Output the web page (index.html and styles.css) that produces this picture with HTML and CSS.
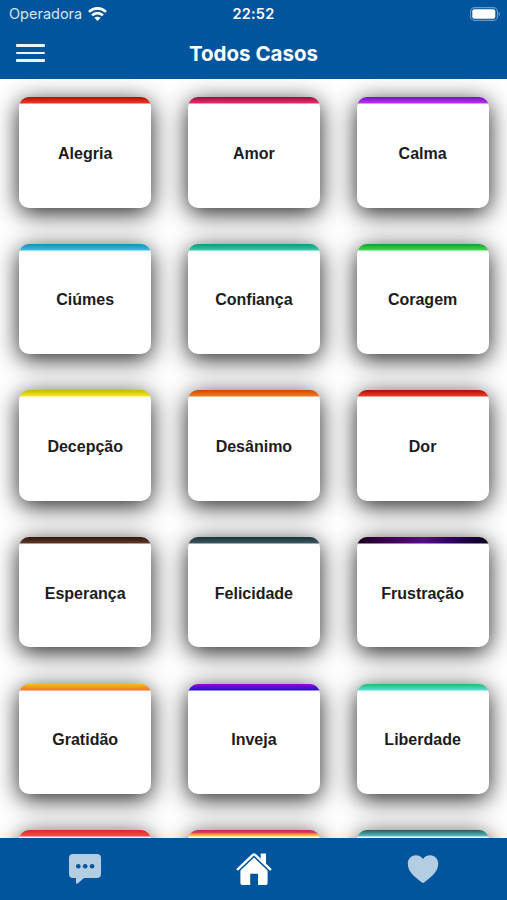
FILE: index.html
```html
<!DOCTYPE html>
<html lang="pt-BR">
<head>
    <meta charset="UTF-8">
    <meta name="viewport" content="width=device-width, initial-scale=1.0">
    <title>Todos Casos</title>
    <link rel="stylesheet" href="styles.css">
</head>

<body>

<header>
    <!-- Status bar -->
    <div class="status-bar">
        <div class="carrier">
            <span>Operadora</span>
            <svg class="wifi" width="19" height="14" viewBox="0 0 19 14" fill="none" stroke="#fff" stroke-width="2.7">
                <path d="M1 4.9C5.8 .2 13.2 .2 18 4.9"/>
                <path d="M4.1 8.4c3.1-3 7.7-3 10.8 0"/>
                <path d="M9.5 13.9L6.4 10.8c1.7-1.5 4.5-1.5 6.2 0z" fill="#fff" stroke="none"/>
            </svg>
        </div>
        <span class="clock">22:52</span>
        <svg class="battery" width="31" height="14" viewBox="0 0 31 14">
            <rect x=".6" y=".6" width="26.8" height="12.8" rx="4" fill="none" stroke="#6a9bc8" stroke-width="1.1"/>
            <rect x="2.3" y="2.3" width="23" height="9.4" rx="2" fill="#fff"/>
            <path d="M28.6 5c1.8.5 1.8 3.5 0 4z" fill="#6a9bc8"/>
        </svg>
    </div>

    <!-- Title bar -->
    <div class="title-bar">
        <button class="menu-btn" aria-label="Menu"><i></i><i></i><i></i></button>
        <h1>Todos Casos</h1>
    </div>
</header>

<main>
    <div class="cards">
        <div class="card alegria">Alegria</div>
        <div class="card amor">Amor</div>
        <div class="card calma">Calma</div>
        <div class="card ciumes">Ciúmes</div>
        <div class="card confianca">Confiança</div>
        <div class="card coragem">Coragem</div>
        <div class="card decepcao">Decepção</div>
        <div class="card desanimo">Desânimo</div>
        <div class="card dor">Dor</div>
        <div class="card esperanca">Esperança</div>
        <div class="card felicidade">Felicidade</div>
        <div class="card frustracao">Frustração</div>
        <div class="card gratidao">Gratidão</div>
        <div class="card inveja">Inveja</div>
        <div class="card liberdade">Liberdade</div>
        <div class="card row6-a"></div>
        <div class="card row6-b"></div>
        <div class="card row6-c"></div>
    </div>
</main>

<!-- Bottom tabs -->
<nav>
    <a class="tab">
        <svg width="34" height="32" viewBox="0 0 34 32">
            <path d="M5 1H29Q33 1 33 5V21Q33 25 29 25H16L10 30.2Q8 31.8 8 29.5V25H5Q1 25 1 21V5Q1 1 5 1Z" fill="#b3cde3"/>
            <g fill="#00559c">
                <circle cx="10.3" cy="13.2" r="2.3"/>
                <circle cx="17.2" cy="13.2" r="2.3"/>
                <circle cx="24.1" cy="13.2" r="2.3"/>
            </g>
        </svg>
    </a>
    <a class="tab active">
        <svg width="36" height="34" viewBox="0 0 36 34">
            <path d="M24.7 1.6H30V14L24.7 9Z" fill="#fff"/>
            <path d="M18 5L31.6 18V31.3Q31.6 33 29.9 33H22V21.8H14.2V33H6.1Q4.4 33 4.4 31.3V18Z" fill="#fff"/>
            <path d="M2.6 19.2L18 4.6L33.4 19.2" fill="none" stroke="#00559c" stroke-width="1.4"/>
            <path d="M1.7 17.3L16.6 3.2Q18 1.9 19.4 3.2L34.3 17.3" fill="none" stroke="#fff" stroke-width="2.4" stroke-linecap="round"/>
        </svg>
    </a>
    <a class="tab">
        <svg width="32" height="30" viewBox="0 0 32 30">
            <path d="M16 28.9Q15.3 28.9 14.6 28.3C6.6 22.2 .8 17.5 .8 9.6C.8 4.8 4.2 1.2 8.8 1.2C11.9 1.2 14.5 2.7 16 5.1C17.5 2.7 20.1 1.2 23.2 1.2C27.8 1.2 31.2 4.8 31.2 9.6C31.2 17.5 25.4 22.2 17.4 28.3Q16.7 28.9 16 28.9Z" fill="#b3cde3"/>
        </svg>
    </a>
</nav>

</body>
</html>
```
FILE: styles.css
```css
* {
    box-sizing: border-box;
}
body {
    display: flex;
    flex-direction: column;
    height: 100vh;
    margin: 0;
    overflow: hidden;
    font-family: "Liberation Sans", Arial, sans-serif;
    background-color: #fff;
}
header {
    flex: none;
    height: 79px;
    background-color: #00559c;
    color: #fff;
    font-family: Inter, sans-serif;
}

/* status bar */
.status-bar {
    display: grid;
    grid-template-columns: 1fr auto 1fr;
    align-items: center;
    height: 27px;
    padding: 0 6px 0 9px;
}
.carrier {
    display: flex;
    align-items: center;
    gap: 6px;
    font-size: 14.5px;
    color: #d5e5f3;
}
.clock {
    margin-right: 3px;
    font-size: 14.5px;
    font-weight: 600;
    letter-spacing: 0.2px;
}
.battery {
    justify-self: end;
}

/* title bar */
.title-bar {
    display: grid;
    grid-template-columns: 1fr auto 1fr;
    align-items: center;
    height: 52px;
    padding: 0 16px;
}
.title-bar h1 {
    margin: 0;
    font-size: 20.5px;
    font-weight: 700;
}
.menu-btn {
    display: flex;
    flex-direction: column;
    gap: 4.5px;
    width: 29px;
    padding: 0;
    border: none;
    background: none;
}
.menu-btn i {
    height: 2.8px;
    border-radius: 1px;
    background-color: #e8f6fc;
}

/* cards */
main {
    flex: 1;
    min-height: 0;
    overflow: hidden;
}
.cards {
    display: grid;
    grid-template-columns: repeat(3, 132px);
    grid-auto-rows: 110.4px;
    justify-content: space-between;
    row-gap: 36.2px;
    padding: 18.2px 18.4px 0 19.2px;
}
.card {
    display: flex;
    align-items: center;
    justify-content: center;
    padding-top: 3px;
    border-radius: 10px;
    background-color: #fff;
    background-image: linear-gradient(var(--from), var(--to));
    background-size: 100% 6.5px;
    background-repeat: no-repeat;
    box-shadow: 0 5px 25px rgba(0, 0, 0, 0.88);
    color: #1c1c1e;
    font-size: 16px;
    font-weight: bold;
}
.alegria { --from: #b01208; --to: #ee3a22; }
.amor { --from: #a00c3c; --to: #e83070; }
.calma { --from: #7a10c0; --to: #b935f5; }
.ciumes { --from: #1590b5; --to: #35bfe5; }
.confianca { --from: #0f9878; --to: #30cfa8; }
.coragem { --from: #149c2c; --to: #3ee056; }
.decepcao { --from: #c9b60c; --to: #f3ec22; }
.desanimo { --from: #c24c08; --to: #fa7a20; }
.dor { --from: #a80f0a; --to: #f04022; }
.esperanca { --from: #35160e; --to: #5e3a2c; }
.felicidade { --from: #1c333c; --to: #3c5860; }
.frustracao {
    background-image: linear-gradient(to right, #1c0018, #38004c 20%, #52107e 50%, #2a0058 75%, #080018);
}
.gratidao { --from: #f5bd10; --to: #fa7030; }
.inveja { --from: #8a0cd8; --to: #2210d0; }
.liberdade { --from: #1cbc70; --to: #50e5d8; }
.row6-a { --from: #cc3422; --to: #ff4560; }
.row6-b {
    background-image: linear-gradient(#bd2860, #d8405a 40%, #f5a030 65%, #f8d850);
}
.row6-c { --from: #33575e; --to: #48c8d8; }

/* bottom tabs */
nav {
    display: grid;
    grid-template-columns: repeat(3, 1fr);
    flex: none;
    height: 62px;
    background-color: #00559c;
}
.tab {
    display: flex;
    align-items: center;
    justify-content: center;
}
```
